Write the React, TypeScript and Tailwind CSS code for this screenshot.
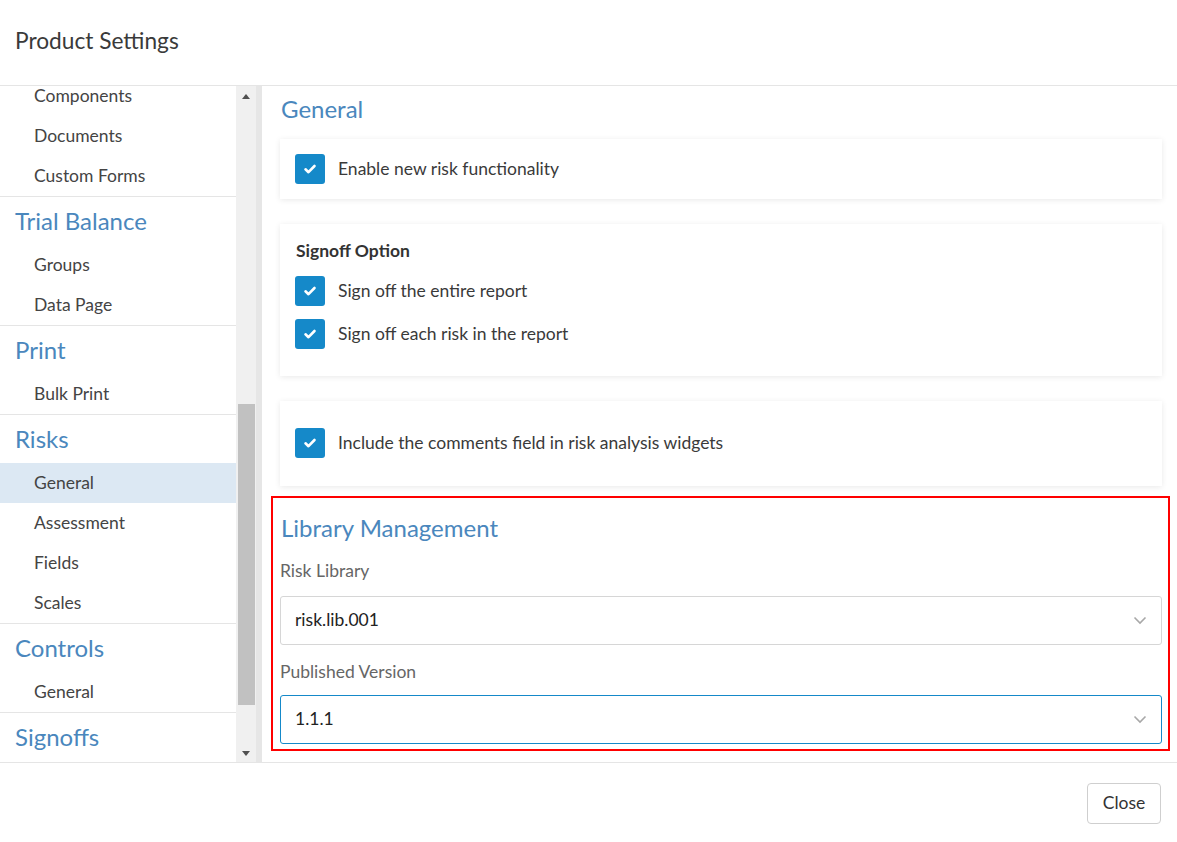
import React from 'react'

type Section = { title: string; items: string[]; active?: number }

const sections: Section[] = [
    { title: 'Trial Balance', items: ['Groups', 'Data Page'] },
    { title: 'Print', items: ['Bulk Print'] },
    { title: 'Risks', items: ['General', 'Assessment', 'Fields', 'Scales'], active: 0 },
    { title: 'Controls', items: ['General'] },
    { title: 'Signoffs', items: [] },
]

function Check({ label }: { label: string }) {
    return (
        <div className="flex items-center gap-[13px]">
            <div className="w-[30px] h-[30px] rounded-[3px] bg-[#1589c9] flex items-center justify-center">
                <svg width="14" height="14" viewBox="0 0 14 14" fill="none">
                    <path d="M2.5 7.3l3 2.9L11.5 4" stroke="white" strokeWidth="2.6" strokeLinecap="round" strokeLinejoin="round" />
                </svg>
            </div>
            <span className="text-[17.5px] text-[#3a3a3a]">{label}</span>
        </div>
    )
}

function Select({ value, focused }: { value: string; focused?: boolean }) {
    return (
        <div className={`h-[49px] rounded-[3px] border flex items-center justify-between pl-[14px] pr-[14px] ${focused ? 'border-[#1589c9]' : 'border-[#d6d6d6]'}`}>
            <span className="text-[17.5px] text-[#222]">{value}</span>
            <svg width="14" height="9" viewBox="0 0 14 9" fill="none">
                <path d="M1.5 1.5L7 7l5.5-5.5" stroke="#a8a8a8" strokeWidth="1.6" />
            </svg>
        </div>
    )
}

function App() {
    return (
        <div className="w-[1177px] h-[842px] bg-white flex flex-col font-['Lato','Liberation_Sans',sans-serif] text-[#333]">
            <div className="h-[86px] shrink-0 border-b border-[#e5e5e5] flex items-center px-[15px] pb-[2px]">
                <h1 className="text-[22.7px] text-[#3a3a3a]">Product Settings</h1>
            </div>

            <div className="h-[677px] shrink-0 flex border-b border-[#e5e5e5]">
                {/* sidebar */}
                <div className="w-[236px] overflow-hidden">
                    <div className="-mt-[10px]">
                        <div className="border-b border-[#e5e5e5]">
                            {['Components', 'Documents', 'Custom Forms'].map((i) => (
                                <div key={i} className="h-[40px] flex items-center pl-[34px] text-[17.5px] text-[#444]">{i}</div>
                            ))}
                        </div>
                        {sections.map((s) => (
                            <div key={s.title} className="border-b border-[#e5e5e5] last:border-b-0">
                                <div className="h-[48px] flex items-center px-[15px] text-[24px] text-[#4a87bd]">{s.title}</div>
                                {s.items.map((i, idx) => (
                                    <div key={i}
                                        className={`h-[40px] flex items-center pl-[34px] text-[17.5px] text-[#444] ${s.active === idx ? 'bg-[#dce8f3]' : ''}`}>
                                        {i}
                                    </div>
                                ))}
                            </div>
                        ))}
                    </div>
                </div>

                {/* scrollbar */}
                <div className="w-[20px] bg-[#f0f0f0] flex flex-col">
                    <div className="h-[17px] flex items-center justify-center pt-[4px]">
                        <div className="w-0 h-0 border-x-[4px] border-x-transparent border-b-[5px] border-b-[#505050]" />
                    </div>
                    <div className="flex-1 flex flex-col px-[2px] pr-[1px]">
                        <div className="h-[301px]" />
                        <div className="h-[301px] bg-[#c1c1c1]" />
                    </div>
                    <div className="h-[17px] flex items-center justify-center">
                        <div className="w-0 h-0 border-x-[4px] border-x-transparent border-t-[5px] border-t-[#505050]" />
                    </div>
                </div>
                <div className="w-[6px] bg-[#e6e6e6]" />

                {/* content */}
                <div className="flex-1 pl-[18px] pr-[15px] overflow-hidden">
                    <h2 className="mt-[9px] h-[28px] leading-[28px] pl-[1px] text-[24px] text-[#4a87bd]">General</h2>

                    <div className="mt-[16px] bg-white shadow-[0_1px_6px_rgba(0,0,0,0.09)] px-[15px] py-[15px]">
                        <Check label="Enable new risk functionality" />
                    </div>

                    <div className="mt-[25px] bg-white shadow-[0_1px_6px_rgba(0,0,0,0.09)] px-[16px] pt-[15px] pb-[27px]">
                        <div className="h-[24px] leading-[24px] text-[17.5px] font-bold text-[#333]">Signoff Option</div>
                        <div className="mt-[13px] flex flex-col gap-[13px] -ml-[1px]">
                            <Check label="Sign off the entire report" />
                            <Check label="Sign off each risk in the report" />
                        </div>
                    </div>

                    <div className="mt-[25px] bg-white shadow-[0_1px_6px_rgba(0,0,0,0.09)] px-[15px] pt-[27px] pb-[28px]">
                        <Check label="Include the comments field in risk analysis widgets" />
                    </div>

                    <div className="mt-[10px] -ml-[9px] -mr-[8px] border-2 border-[#ff0000] pl-[7px] pr-[6px] pt-[16px] pb-[5px]">
                        <h2 className="h-[28px] leading-[28px] pl-[1px] text-[24px] text-[#4a87bd]">Library Management</h2>
                        <div className="mt-[17px] h-[24px] leading-[24px] text-[17.5px] text-[#666]">Risk Library</div>
                        <div className="mt-[13px]">
                            <Select value="risk.lib.001" />
                        </div>
                        <div className="mt-[15px] h-[24px] leading-[24px] text-[17.5px] text-[#666]">Published Version</div>
                        <div className="mt-[11px]">
                            <Select value="1.1.1" focused />
                        </div>
                    </div>
                </div>
            </div>

            <div className="flex-1 flex justify-end items-start pt-[20px] pr-[16px]">
                <button className="h-[41px] w-[74px] rounded-[4px] border border-[#cfcfcf] bg-white text-[17.5px] text-[#333]">Close</button>
            </div>
        </div>
    )
}

export default App
